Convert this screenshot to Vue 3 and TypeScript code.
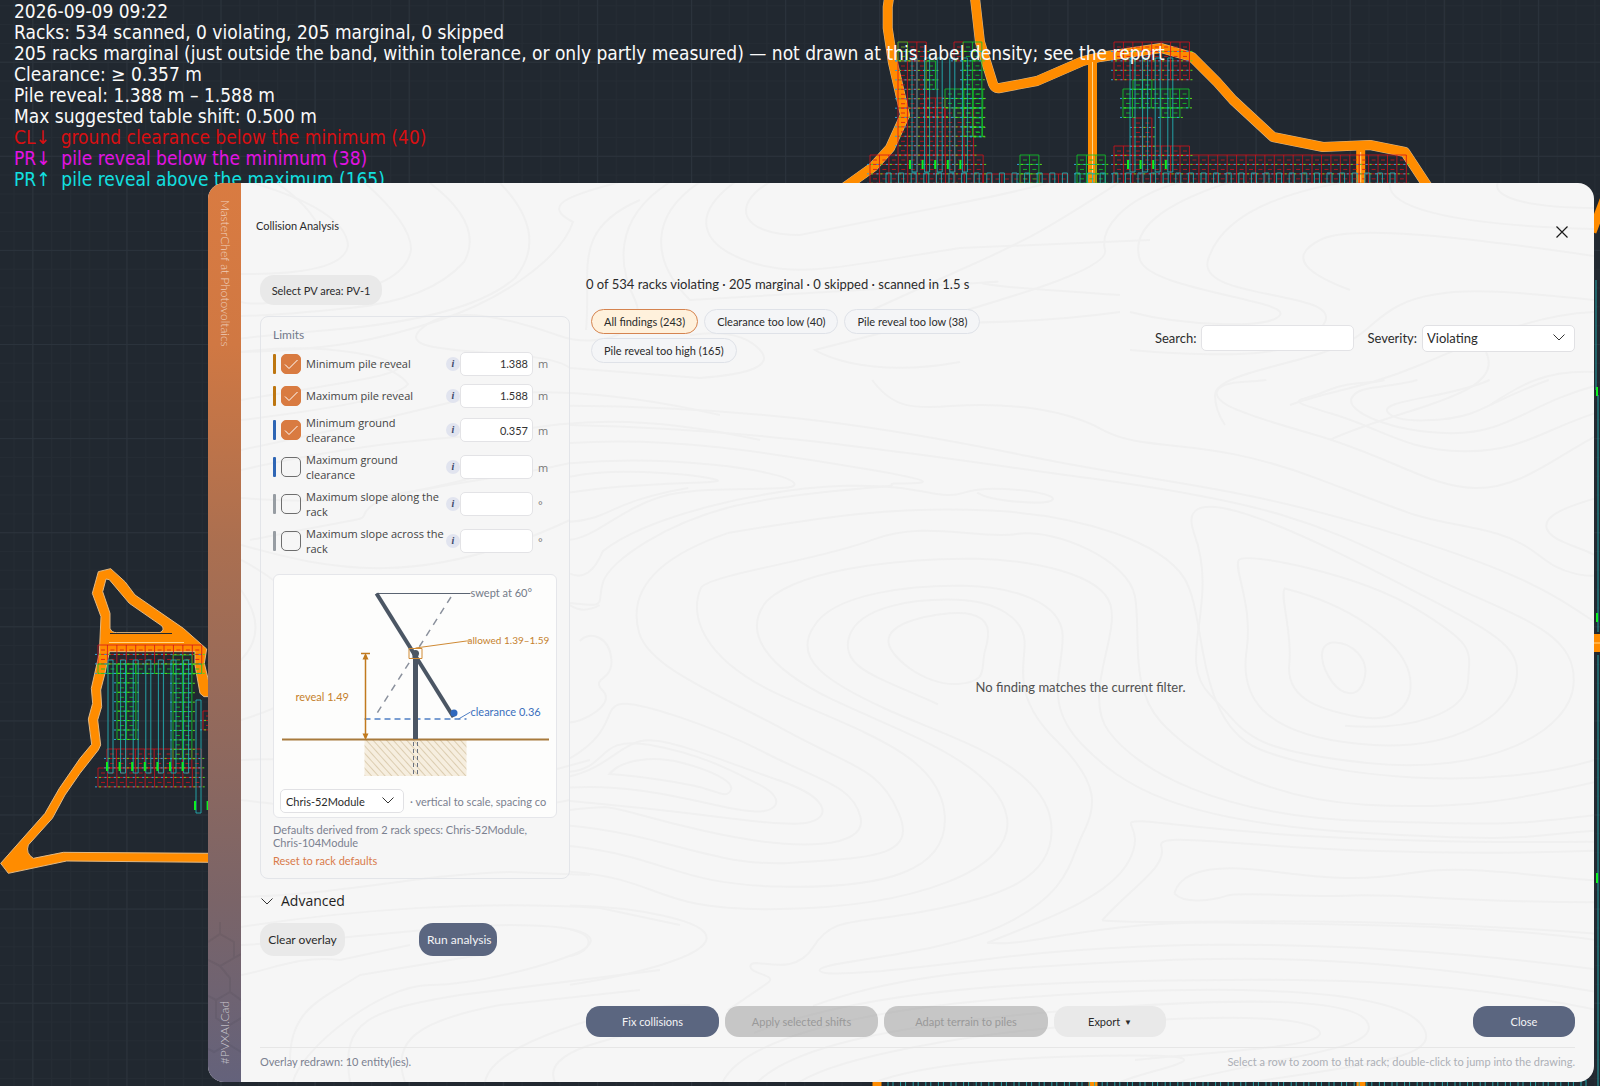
<script setup lang="ts">
import { ref } from 'vue'

interface Limit {
  id: string
  label: string
  on: boolean
  value: string
  unit: string
  tone: 'amber' | 'blue' | 'gray'
}

const limits = ref<Limit[]>([
  { id: 'min-reveal', label: 'Minimum pile reveal', on: true, value: '1.388', unit: 'm', tone: 'amber' },
  { id: 'max-reveal', label: 'Maximum pile reveal', on: true, value: '1.588', unit: 'm', tone: 'amber' },
  { id: 'min-clear', label: 'Minimum ground clearance', on: true, value: '0.357', unit: 'm', tone: 'blue' },
  { id: 'max-clear', label: 'Maximum ground clearance', on: false, value: '', unit: 'm', tone: 'blue' },
  { id: 'slope-along', label: 'Maximum slope along the rack', on: false, value: '', unit: '°', tone: 'gray' },
  { id: 'slope-across', label: 'Maximum slope across the rack', on: false, value: '', unit: '°', tone: 'gray' },
])

const filters = ['All findings (243)', 'Clearance too low (40)', 'Pile reveal too low (38)', 'Pile reveal too high (165)']
const activeFilter = ref(filters[0])
const search = ref('')
const severity = ref('Violating')
const rackSpec = ref('Chris-52Module')

const notes = [
  { text: '2026-09-09 09:22', tone: 'white' },
  { text: 'Racks: 534 scanned, 0 violating, 205 marginal, 0 skipped', tone: 'white' },
  { text: '205 racks marginal (just outside the band, within tolerance, or only partly measured) — not drawn at this label density; see the report', tone: 'white' },
  { text: 'Clearance: ≥ 0.357 m', tone: 'white' },
  { text: 'Pile reveal: 1.388 m – 1.588 m', tone: 'white' },
  { text: 'Max suggested table shift: 0.500 m', tone: 'white' },
  { text: 'CL↓  ground clearance below the minimum (40)', tone: 'red' },
  { text: 'PR↓  pile reveal below the minimum (38)', tone: 'magenta' },
  { text: 'PR↑  pile reveal above the maximum (165)', tone: 'cyan' },
]

/* Rack blocks of the drawing: x, y, columns, rows, colour */
type Block = [number, number, number, number, 'r' | 'g']
const CELL = 9.43
const blocks: Block[] = [
  [898, 42, 3, 2, 'r'], [898, 61, 3, 5, 'r'], [898, 108, 8, 5, 'r'], [870, 155, 12, 3, 'r'],
  [926, 61, 1, 3, 'g'], [954, 42, 1, 2, 'r'], [963, 42, 2, 10, 'g'], [945, 89, 4, 2, 'g'],
  [954, 108, 3, 1, 'g'], [973, 118, 1, 2, 'g'], [926, 98, 2, 2, 'r'], [898, 42, 1, 2, 'g'],
  [1020, 155, 2, 3, 'g'], [1077, 155, 3, 3, 'g'], [983, 174, 9, 1, 'r'],
  [1114, 42, 8, 4, 'r'], [1123, 89, 7, 2, 'g'], [1123, 108, 1, 1, 'g'], [1161, 108, 2, 1, 'g'],
  [1133, 118, 2, 3, 'r'], [1133, 80, 2, 1, 'g'], [1114, 146, 8, 1, 'r'], [1114, 155, 31, 3, 'r'],
  [98, 645, 11, 2, 'r'], [98, 664, 11, 1, 'g'], [117, 664, 2, 8, 'g'], [173, 655, 2, 11, 'g'],
  [107, 749, 10, 2, 'r'], [98, 768, 11, 2, 'r'], [203, 711, 1, 2, 'r'],
]

function cellPath(color: string): string {
  return blocks.filter(b => b[4] === color).map(([x, y, c, r]) => {
    let d = ''
    for (let i = 0; i <= c; i++) d += `M${x + i * CELL} ${y}v${r * CELL}`
    for (let j = 0; j <= r; j++) d += `M${x} ${y + j * CELL}h${c * CELL}`
    for (let i = 0; i < c; i++) for (let j = 0; j < r; j++) d += `M${x + i * CELL + 3} ${y + j * CELL + 5}h4`
    return d
  }).join('')
}

function pinPath(offset: number): string {
  return blocks.map(([x, y, c, r]) => {
    let d = ''
    for (let i = 0; i <= c; i++) for (let j = 1; j <= r; j++) d += `M${x + i * CELL + offset} ${y + j * CELL}h2`
    return d
  }).join('')
}

function strings(x: number, y: number, h: number, n: number, step = 12.6): string {
  return Array.from({ length: n }, (_, i) => `M${x + i * step} ${y}h5v${h}h-5z`).join('')
}

function ticks(x: number, y: number, n: number): string {
  return Array.from({ length: n }, (_, i) => `M${x + i * 12.6} ${y}v9`).join('')
}

const redCells = cellPath('r')
const greenCells = cellPath('g')
const bluePins = pinPath(-3)
const greenPins = pinPath(1)
const stringPath = [
  strings(108, 660, 113, 7), strings(196, 700, 113, 1),
  strings(912, 58, 114, 5), strings(1130, 58, 114, 4),
  strings(886, 173, 14, 41),
  strings(888, 1080, 10, 56), 'M1598 395V632M1598 655V1086M1596 280V390',
].join('')
const tickPath = [
  ticks(107, 762, 7), ticks(195, 801, 2), ticks(910, 160, 5), ticks(1128, 160, 4),
  'M1597 387v9M1597 613v9M1597 873v10',
].join('')

/* Height contours behind the dialog content, upper and left part */
const contours = [
  'M250 182Q345 210 348 245Q345 275 241 274',
  'M275 182Q310 205 320 230',
  'M365 183Q412 225 411 250Q405 285 330 296T241 302',
  'M430 183Q485 225 464 262Q430 300 350 308T241 316',
  'M500 183Q550 235 515 278Q470 318 330 330T241 342',
  'M620 182C570 195 540 205 573 222C560 260 500 300 440 320S330 350 241 352',
  'M640 200C570 230 592 270 586 330',
  'M670 182C610 220 620 270 635 300C650 330 600 350 560 336S450 300 420 330S540 345 570 368T700 378Q780 372 760 350T690 335',
  'M700 182C650 215 650 260 690 300T860 290T990 282T1120 295',
  'M735 182C690 215 700 245 750 262S850 265 960 248T1150 240',
  'M770 182C730 205 740 235 800 235T950 205T1020 182',
  'M1120 182C1060 220 1040 235 960 270T850 320S990 330 1120 312',
  'M1180 182C1120 200 1100 230 1105 250S1000 300 940 318T815 350S860 380 960 362',
  'M1230 182C1160 205 1130 230 1140 260S1290 300 1280 315S1180 325 1130 312',
  'M1345 182C1270 195 1220 220 1208 260S1340 290 1325 322S1250 360 1130 350',
  'M1390 182C1385 205 1440 225 1594 229',
  'M1498 182C1490 200 1540 208 1594 208',
  'M1594 256C1450 235 1350 225 1320 240C1285 258 1310 275 1350 290',
  'M1594 300C1500 290 1440 285 1400 305C1370 320 1370 335 1330 350S1215 375 1215 395Q1215 410 1225 425',
  'M1594 312C1530 315 1480 340 1420 365S1330 390 1290 405',
  'M1486 352C1500 380 1460 395 1420 408S1350 430 1330 440',
  'M1594 372C1545 370 1520 385 1490 405',
  'M241 352C330 340 400 360 398 368S330 385 241 400',
  'M241 420C340 408 400 396 408 384Q400 372 365 360',
  'M241 450C360 425 420 410 460 400S590 385 720 415',
  'M241 470C350 445 420 440 480 435S600 405 760 440',
  'M241 498C330 505 400 500 500 470',
  'M250 540C400 510 350 525 370 507S500 480 570 463',
  'M241 545C330 570 420 590 570 520',
  'M241 560Q300 590 320 640T241 720',
  'M241 590Q270 630 241 660',
  'M241 760C330 755 400 775 480 790T590 760',
  'M241 800C330 810 430 830 570 800',
  'M241 897C340 895 420 874 510 872T590 875',
  'M241 927C350 910 480 900 600 908T680 925',
  'M241 945C350 940 440 925 510 925C580 925 600 935 587 947S480 985 430 985S300 1050 293 1082',
  'M241 975C270 970 300 955 340 960T410 945',
  'M290 1060C290 1010 320 1000 360 975T480 955',
  'M350 1082C340 1020 370 1010 460 995T660 970',
  'M405 1082C390 1040 420 1020 500 1005T640 990',
  'M485 1082Q490 1055 560 1030T690 1005',
  'M555 1082Q545 1060 590 1045T690 1025',
]

/* Contours of the results area, drawn on a 1568-unit square sheet */
const sheetContours = [
  'M460 0C490 60 520 65 580 58S740 55 810 110S960 120 1140 220S1280 300 1380 330S1470 410 1530 430S1568 400 1568 380',
  'M0 57C300 60 500 110 700 170S1000 230 1230 330S1500 480 1568 545',
  'M0 100C300 110 500 160 800 220S1150 330 1300 430S1530 560 1528 670S1400 880 1210 850S1030 780 975 700S990 500 950 340S1180 390 1300 480S1450 600 1440 670S1350 830 1200 808S1020 700 1030 600S1010 420 1018 400S1200 430 1290 510S1370 600 1367 670S1280 780 1180 768',
  'M1088 463C1080 480 1100 560 1095 630S1130 730 1200 748S1290 700 1275 640S1190 500 1088 463Z',
  'M1160 583C1135 590 1145 640 1160 670S1200 710 1209 665S1190 580 1160 583Z',
  'M0 140C150 125 300 160 460 200S480 225 490 232S350 245 250 280S60 400 50 450S60 505 0 495',
  'M0 185C150 165 320 200 340 227S220 230 150 255S40 350 0 355',
  'M0 215C80 190 220 215 225 223S100 225 0 250',
  'M0 315C60 310 60 270 180 240',
  'M0 430Q30 450 50 380C120 300 300 240 420 235S560 270 600 250S740 250 735 265S640 270 620 250',
  'M240 340C400 300 500 280 640 290S900 360 935 440S950 760 1050 820S1400 920 1568 840',
  'M240 340C120 400 90 480 105 560S230 700 330 780S470 860 500 960S460 1060 340 1072S150 1010 0 990',
  'M200 460C220 430 380 400 460 355S620 355 680 342S850 400 860 480S850 680 900 760S1060 930 1210 943S1450 930 1568 890',
  'M200 460C180 520 200 620 320 700S560 830 570 960S480 1130 320 1125S150 1060 0 1035',
  'M300 490C360 410 540 395 620 397S810 430 823 500S780 700 820 780S980 970 1220 980S1450 985 1568 965',
  'M300 490C260 560 300 640 400 710S650 850 665 970S520 1170 320 1175S150 1110 0 1092',
  'M370 550C400 470 530 455 600 457S750 490 750 570S720 720 780 810S920 980 1200 1005S1450 1010 1568 1000',
  'M370 550C340 620 390 670 480 730S720 850 732 980S650 1150 540 1180S400 1190 370 1260S280 1280 275 1300S320 1320 300 1340T240 1400',
  'M425 570C440 500 530 485 590 488S690 530 692 580S670 700 740 800S800 950 780 1010S760 1140 660 1210S380 1290 380 1310S500 1310 640 1285S1100 1220 1568 1310',
  'M425 570C410 640 470 660 560 720',
  'M485 575C490 530 580 510 610 520S640 560 632 600S640 670 590 675S480 610 485 575Z',
  'M0 500Q20 520 45 500M15 580C30 555 60 570 63 620S30 660 50 690S20 760 0 760',
  'M0 840C70 780 50 730 75 720S220 770 300 830S430 900 442 970S350 1050 200 1000S80 940 0 955',
  'M0 880C60 860 80 800 120 800S240 850 320 890S400 980 350 985S200 960 0 935',
  'M60 875C80 840 130 835 170 850S250 890 245 910S225 915 200 905S110 880 60 875Z',
  'M0 905C100 895 200 940 260 955S330 930 290 900S200 830 120 810S60 860 0 870',
  'M0 1167C100 1170 210 1200 208 1240S100 1320 0 1343',
  'M0 1220Q30 1230 28 1250T0 1280',
  'M635 1250C720 1200 820 1150 850 1070S830 980 870 980S1100 1035 1568 1025',
  'M635 1250C700 1260 800 1200 1000 1205S1400 1210 1568 1245',
  'M810 1200C860 1120 910 1080 900 1035S1100 1070 1568 1045',
  'M810 1200C900 1215 1100 1180 1568 1230',
  'M920 1140C930 1090 980 1075 1060 1090S1200 1115 1280 1095S1450 1100 1568 1112',
  'M920 1140C935 1165 980 1155 1000 1145S1120 1150 1190 1145S1350 1160 1568 1160',
  'M370 1390C480 1330 600 1310 800 1295S1200 1270 1568 1360',
  'M280 1450C420 1370 620 1340 850 1335S1300 1320 1568 1400',
  'M230 1568C250 1480 400 1400 700 1370S1250 1350 1295 1430S1200 1520 1000 1568',
  'M280 1568C330 1480 500 1430 760 1400S1200 1370 1215 1430S1080 1500 900 1568',
  'M340 1568C400 1500 620 1450 800 1430S1120 1410 1140 1445S1000 1490 860 1510',
  'M450 1568C520 1520 680 1500 860 1500S840 1540 830 1568',
  'M1568 120C1500 170 1450 240 1380 240S1250 170 1130 120S980 50 985 25S1040 5 1060 0',
  'M1568 70C1480 110 1450 160 1360 158S1240 110 1160 75S1110 50 1150 25S1220 10 1240 0',
  'M1568 10C1460 50 1430 120 1340 118S1180 70 1190 40S1240 20 1290 0',
  'M1490 0C1430 30 1400 60 1370 75S1260 100 1245 72S1340 40 1400 0',
  'M1568 260C1520 280 1480 300 1487 330S1540 370 1568 395',
]
</script>

<template>
  <div class="desktop">
    <svg class="drawing" viewBox="0 0 1600 1086" preserveAspectRatio="xMinYMin slice" aria-hidden="true">
      <defs>
        <pattern id="minor" x="32.3" y="61.7" width="18.82" height="18.82" patternUnits="userSpaceOnUse">
          <path d="M0 .5H18.82M.5 0V18.82" stroke="#252c34" fill="none" />
        </pattern>
        <pattern id="major" x="32.3" y="61.7" width="94.1" height="94.1" patternUnits="userSpaceOnUse">
          <path d="M0 .5H94.1M.5 0V94.1" stroke="#2b333c" fill="none" />
        </pattern>
      </defs>
      <rect width="1600" height="1086" fill="url(#minor)" />
      <rect width="1600" height="1086" fill="url(#major)" />
      <g class="road-edge">
        <path d="M889 -2L887.7 7V28L893 63L905 115L890 148L873 167L845 187" />
        <path d="M975 -2L980 42L993 84Q995 89 1000 88L1037 81L1083 61L1100 57L1161 48L1192 57L1217 82L1233 100L1273 137L1323 147L1370 145L1405 152L1430 190" />
      </g>
      <g class="road">
        <path d="M889 -2L887.7 7V28L893 63L905 115L890 148L873 167L845 187" />
        <path d="M975 -2L980 42L993 84Q995 89 1000 88L1037 81L1083 61L1100 57L1161 48L1192 57L1217 82L1233 100L1273 137L1323 147L1370 145L1405 152L1430 190" />
        <path d="M1092.5 58V190M1360.7 148V190M877 1080v8M1093 1080v8M1361 1080v8" />
        <path d="M1592 232L1604 200" />
        <path d="M1590 643h12" stroke-width="18" class="thick" />
      </g>
      <path d="M1092.5 62V190M1360.7 152V190M1594 643h6" stroke="#ffd489" stroke-width="1" />
      <path
        class="area"
        transform="translate(0 540) scale(.33333)"
        fill-rule="evenodd"
        d="M2 970L135 820L178 745L240 655L275 613L265 537L278 490L274 445L298 340L303 230L277 160L295 95L332 86L375 125L405 165L550 265L620 327L613 370L630 440V470L612 470L600 460L585 375V335L328 335L315 400L302 450L305 500L293 540L302 615L295 630L240 700L195 765L157 835L85 915Q76 940 100 955L190 937L630 940V967L200 963L25 1000ZM318 117L308 155L330 220V265Q335 278 350 278H480Q495 270 486 258L388 190L328 119Z"
      />
      <path d="M109 642.5H184" stroke="#ffd489" />
      <path d="M110 633.5H172" stroke="#21282f" />
      <path :d="redCells" stroke="#d4121c" stroke-opacity=".8" fill="none" />
      <path :d="greenCells" stroke="#10c428" stroke-opacity=".85" fill="none" />
      <path :d="bluePins" stroke="#2f9fd8" fill="none" />
      <path :d="greenPins" stroke="#5cd81c" fill="none" />
      <path :d="stringPath" stroke="#22aeb2" stroke-opacity=".9" fill="none" />
      <path :d="tickPath" stroke="#0df020" stroke-width="2" fill="none" />
    </svg>

    <div class="notes">
      <p v-for="n in notes" :key="n.text" :class="n.tone">{{ n.text }}</p>
    </div>

    <section class="dialog" aria-label="Collision Analysis">
      <aside class="rail">
        <svg class="hex" viewBox="0 0 33 160" aria-hidden="true">
          <path d="M0 20L12 12L26 20V36L12 44L0 38M12 44L22 56V70L33 78M22 70L8 78L0 74M8 78V96L20 104L33 96M20 104V122L6 130L0 127M20 122L33 130M26 36L33 32M12 12V0" />
        </svg>
        <span class="motto">MasterChef at Photovoltaics</span>
        <span class="brand">#PVXAI.Cad</span>
      </aside>

      <div class="main">
        <svg class="relief" viewBox="241 183 1353 899" preserveAspectRatio="xMinYMin slice" aria-hidden="true">
          <path v-for="(d, i) in contours" :key="'c' + i" :d="d" />
          <g transform="translate(570 380) scale(.6569 .4503)">
            <path v-for="(d, i) in sheetContours" :key="'s' + i" :d="d" />
          </g>
        </svg>

        <header class="head">
          <h1>Collision Analysis</h1>
          <button class="close-x" type="button" aria-label="Close dialog">
            <svg width="12" height="12" viewBox="0 0 12 12"><path d="M.5 .5L11.500 11.500M11.500 .5L.5 11.500" /></svg>
          </button>
        </header>

        <div class="columns">
          <div class="left">
            <button class="btn soft pick" type="button">Select PV area: PV-1</button>

            <section class="card">
              <h2>Limits</h2>
              <ul class="limits">
                <li v-for="l in limits" :key="l.id">
                  <i class="bar" :class="l.tone"></i>
                  <span class="check">
                    <input :id="l.id" v-model="l.on" type="checkbox" />
                    <svg v-if="l.on" viewBox="0 0 20 20" aria-hidden="true"><path d="M4 10.500L8 14.500L16.500 6" /></svg>
                  </span>
                  <label :for="l.id">{{ l.label }}</label>
                  <span class="info">i</span>
                  <input v-model="l.value" class="num" type="text" :aria-label="l.label + ' value'" />
                  <span class="unit">{{ l.unit }}</span>
                </li>
              </ul>

              <div class="figure">
                <svg class="rack" viewBox="24 15 281 214" aria-label="Rack cross-section">
                  <defs>
                    <pattern id="soil" width="5" height="5" patternUnits="userSpaceOnUse" patternTransform="rotate(-42)">
                      <rect width="5" height="5" fill="#f6eedf" />
                      <path d="M.5 0V5" stroke="#dccdb0" />
                    </pattern>
                  </defs>
                  <rect x="114" y="180" width="102" height="36" fill="url(#soil)" />
                  <path d="M163 182V216M167 182V216" stroke="#6b7280" stroke-dasharray="4 3" />
                  <path d="M200.500 37L126 154" stroke="#8b919d" stroke-width="1.500" stroke-dasharray="7 6" />
                  <path d="M114 159H216" stroke="#4f7fc4" stroke-width="1.500" stroke-dasharray="6 4" />
                  <path d="M126 33.500H220" stroke="#5b6472" />
                  <path d="M31.500 179.500H298.500" stroke="#a87a3c" stroke-width="2" />
                  <path d="M115 95V178M110.500 93.500H119.500" stroke="#c17a1e" stroke-width="1.500" />
                  <path d="M115 93L118 99.500H112ZM115 180L118 173.500H112Z" fill="#c17a1e" />
                  <path d="M165 94V179" stroke="#4b5664" stroke-width="5" />
                  <path d="M126 33.500L203 157" stroke="#4b5664" stroke-width="4" />
                  <path d="M158.500 88.500H171.500V98.500H158.500ZM165 88L216 81H220" stroke="#cf8a35" fill="none" />
                  <circle cx="165" cy="93.500" r="3.500" fill="#4b5664" />
                  <path d="M208 159L220 152" stroke="#4f7fc4" />
                  <circle cx="203.500" cy="153" r="3.500" fill="#2f68bd" />
                  <text x="220" y="37" fill="#737b89">swept at 60°</text>
                  <text x="217" y="84" fill="#c5812c" class="fine">allowed 1.39–1.59</text>
                  <text x="45" y="141" fill="#c5812c">reveal 1.49</text>
                  <text x="220" y="156" fill="#3a6fbd">clearance 0.36</text>
                </svg>
                <div class="spec">
                  <span class="select small">
                    <select v-model="rackSpec" aria-label="Rack spec">
                      <option>Chris-52Module</option>
                      <option>Chris-104Module</option>
                    </select>
                    <svg class="chev" viewBox="0 0 12 7" aria-hidden="true"><path d="M.5 .5L6 6L11.500 .5" /></svg>
                  </span>
                  <span class="scale">· vertical to scale, spacing co</span>
                </div>
              </div>

              <p class="derived">Defaults derived from 2 rack specs: Chris-52Module, Chris-104Module</p>
              <a class="reset" href="#">Reset to rack defaults</a>
            </section>

            <button class="advanced" type="button">
              <svg class="chev" viewBox="0 0 12 7" aria-hidden="true"><path d="M.5 .5L6 6L11.500 .5" /></svg>
              Advanced
            </button>
            <div class="run">
              <button class="btn soft" type="button">Clear overlay</button>
              <button class="btn solid" type="button">Run analysis</button>
            </div>
          </div>

          <div class="right">
            <p class="summary">0 of 534 racks violating · 205 marginal · 0 skipped · scanned in 1.5 s</p>
            <div class="toolbar">
              <div class="pills">
                <button
                  v-for="f in filters"
                  :key="f"
                  type="button"
                  class="pill"
                  :class="{ active: f === activeFilter }"
                  @click="activeFilter = f"
                >{{ f }}</button>
              </div>
              <div class="query">
                <label for="search">Search:</label>
                <input id="search" v-model="search" type="text" />
                <label for="severity" class="sev">Severity:</label>
                <span class="select wide">
                  <select id="severity" v-model="severity">
                    <option>Violating</option>
                    <option>Marginal</option>
                  </select>
                  <svg class="chev" viewBox="0 0 12 7" aria-hidden="true"><path d="M.5 .5L6 6L11.500 .5" /></svg>
                </span>
              </div>
            </div>
            <div class="results">No finding matches the current filter.</div>
            <div class="actions">
              <button class="btn solid" type="button">Fix collisions</button>
              <button class="btn off" type="button" disabled>Apply selected shifts</button>
              <button class="btn off" type="button" disabled>Adapt terrain to piles</button>
              <button class="btn soft export" type="button">Export <span class="tri">▼</span></button>
              <button class="btn solid last" type="button">Close</button>
            </div>
          </div>
        </div>

        <footer class="status">
          <span>Overlay redrawn: 10 entity(ies).</span>
          <span class="hint">Select a row to zoom to that rack; double-click to jump into the drawing.</span>
        </footer>
      </div>
    </section>
  </div>
</template>

<style>
body { margin: 0; background: #212830; }
</style>

<style scoped>
* { box-sizing: border-box; }
p, h1, h2, ul { margin: 0; padding: 0; font-weight: 400; }
button, input, select { font: inherit; color: inherit; margin: 0; }

.desktop {
  position: relative;
  min-height: 100vh;
  display: flex;
  padding: 183px 6px 4px 208px;
  background: #212830;
  overflow: hidden;
  font-family: Lato, "Liberation Sans", sans-serif;
  font-size: 11px;
  color: #2b2b2b;
}
.drawing { position: absolute; inset: 0; width: 100%; height: 100%; }
.road path { fill: none; stroke: #ff8c00; stroke-width: 9; stroke-linejoin: round; }
.road .thick { stroke-width: 18; }
.road-edge path { fill: none; stroke: #d9b98c; stroke-width: 10; stroke-linejoin: round; }
.area { fill: #ff8c00; stroke: #e3b983; stroke-width: 3; }

.notes {
  position: absolute;
  left: 14px;
  top: 1px;
  font-family: "DejaVu Sans Condensed", "DejaVu Sans", sans-serif;
  font-stretch: condensed;
  font-size: 19px;
  line-height: 21px;
  white-space: pre;
}
.white { color: #fafafa; }
.red { color: #d80f12; }
.magenta { color: #e312e3; }
.cyan { color: #12e0e0; }

.dialog {
  position: relative;
  flex: 1;
  min-width: 0;
  display: flex;
  border-radius: 16px;
  overflow: hidden;
  background: #f6f6f6;
}
.rail {
  position: relative;
  width: 33px;
  flex: none;
  display: flex;
  flex-direction: column;
  justify-content: space-between;
  align-items: center;
  padding: 17px 0 18px;
  background: linear-gradient(#d97b41, #d07843 18%, #ab6f50 40%, #7a6468 80%, #64627b);
  color: rgba(255, 255, 255, 0.65);
  font-weight: 300;
  font-size: 12px;
}
.rail span { writing-mode: vertical-rl; line-height: 16px; }
.brand { transform: rotate(180deg); }
.hex { position: absolute; left: 0; bottom: 0; width: 33px; height: 160px; }
.hex path { fill: none; stroke: rgba(40, 40, 60, 0.09); stroke-width: 2; }

.main { position: relative; flex: 1; min-width: 0; display: flex; flex-direction: column; }
.relief { position: absolute; inset: 0; width: 100%; height: 100%; }
.relief path { fill: none; stroke: #f0f0f0; stroke-width: 2; vector-effect: non-scaling-stroke; }
.head, .columns, .status { position: relative; }

.head { display: flex; justify-content: space-between; height: 92px; padding: 34px 20px 0 15px; }
h1 { font-size: 11px; line-height: 18px; }
.close-x { width: 24px; height: 24px; margin-top: 3px; padding: 0; border: 0; background: none; display: grid; place-items: center; }
.close-x path { stroke: #1a1a1a; stroke-width: 1.2; fill: none; }

.columns { flex: 1; display: grid; grid-template-columns: 310px 1fr; column-gap: 16px; padding: 0 19px 10px; }
.left { display: flex; flex-direction: column; align-items: flex-start; }
.btn { border: 0; border-radius: 14px; padding: 0 10px; height: 31px; white-space: nowrap; font-size: 11px; }
.soft { background: #e9e9e9; }
.solid { background: #5b6680; color: #f4f4f6; }
.off { background: rgba(120, 120, 120, 0.38); color: #999; }
.pick { width: 122px; height: 30px; }

.card { align-self: stretch; margin-top: 11px; height: 563px; border: 1px solid #e3e5e9; border-radius: 8px; padding: 10px 12px; }
h2 { font-size: 12px; line-height: 16px; color: #737a8c; }
.limits { list-style: none; display: grid; gap: 7px; padding-top: 8px; }
.limits li { display: flex; align-items: center; min-height: 25px; font-family: "Open Sans", "Noto Sans", sans-serif; }
.bar { width: 3px; height: 20px; border-radius: 1px; }
.amber { background: #bd7610; }
.blue { background: #2f66b5; }
.gray { background: #979da3; }
.check { display: grid; width: 20px; height: 20px; margin-left: 5px; }
.check > * { grid-area: 1 / 1; }
.check input { appearance: none; width: 20px; height: 20px; border: 1px solid #6e6e6e; border-radius: 5px; }
.check input:checked { background: #d97b41; border-color: #d97b41; }
.check svg { width: 20px; height: 20px; pointer-events: none; }
.check path { fill: none; stroke: #fff; stroke-width: 1; }
.limits label { flex: 1; padding-left: 5px; font-size: 11px; line-height: 15px; color: #444; }
.info {
  width: 14px; height: 14px; border-radius: 7px; background: #e1e4ef; color: #3d4669;
  font: italic bold 10px/14px "Liberation Serif", serif; text-align: center;
}
.num {
  width: 73px; height: 24px; padding: 0 4px; border: 1px solid #e3e3e6; border-radius: 5px;
  background: #fff; text-align: right; font-family: Lato, sans-serif; font-size: 11px; color: #333;
}
.unit { width: 19px; margin-left: 5px; font-size: 11px; color: #777; }

.figure { height: 244px; margin-top: 18px; border: 1px solid #e5e6ea; border-radius: 6px; background: #fdfdfc; overflow: hidden; }
.rack { display: block; width: 100%; height: 214px; }
.rack text { font-family: Lato, sans-serif; font-size: 11px; }
.rack .fine { font-size: 10px; }
.spec { display: flex; align-items: center; gap: 6px; padding: 0 4px 0 6px; }
.select { position: relative; display: inline-flex; }
.select select { appearance: none; width: 100%; border: 1px solid #e1e1e4; border-radius: 5px; background: #fff; }
.select .chev { position: absolute; right: 10px; top: 50%; margin-top: -4px; pointer-events: none; }
.chev { width: 12px; height: 7px; }
.chev path { fill: none; stroke: #333; }
.small { flex: none; width: 124px; }
.small select { height: 24px; padding: 0 5px; font-size: 11px; }
.wide { width: 153px; }
.wide select { height: 27px; padding: 0 4px; }
.scale { white-space: nowrap; color: #7b8190; font-size: 11px; }
.derived { margin-top: 5px; font-size: 11px; line-height: 13px; color: #7b8190; }
.reset { display: block; margin-top: 5px; font-size: 11px; line-height: 14px; color: #d97b4b; text-decoration: none; }

.advanced {
  display: flex; align-items: center; gap: 8px; margin-top: 12px; padding: 0 1px; border: 0; background: none;
  font-family: "Open Sans", "Noto Sans", sans-serif; font-size: 14px; line-height: 20px; color: #1e1e1e;
}
.run { display: flex; gap: 74px; margin-top: 12px; }
.run .btn { height: 33px; padding: 0 8px; font-size: 12px; }
.run .soft { width: 85px; }
.run .solid { width: 78px; }

.right { display: flex; flex-direction: column; min-width: 0; }
.summary { font-size: 13px; line-height: 18px; }
.toolbar { display: flex; justify-content: space-between; align-items: center; gap: 32px; margin-top: 16px; }
.pills { flex: 1; display: flex; flex-wrap: wrap; gap: 4px 6px; padding-left: 5px; }
.pill { height: 25px; padding: 0 12px; border: 1px solid #dfe2e8; border-radius: 13px; background: #f4f5f7; font-size: 11px; }
.pill.active { background: #fff1dc; border-color: #d58450; }
.query { display: flex; align-items: center; padding-top: 4px; font-size: 13px; }
.query input { width: 153px; height: 26px; margin-left: 5px; border: 1px solid #e3e3e6; border-radius: 5px; background: #fff; }
.sev { margin: 0 5px 0 13px; }
.results { flex: 1; display: grid; place-items: center; padding: 5px 0 0; font-size: 13px; color: #505050; }
.actions { display: flex; gap: 6px; }
.actions .btn { width: 133px; }
.actions .off { width: 153px; }
.actions .off + .off { width: 164px; }
.actions .export { width: 112px; }
.actions .last { width: 102px; margin-left: auto; }
.tri { font-size: 8px; vertical-align: 1px; margin-left: 1px; }

.status { display: flex; justify-content: space-between; margin: 0 19px; padding: 6px 0 13px; border-top: 1px solid #e6e6e6; line-height: 15px; font-size: 11px; color: #7b8190; }
.hint { color: #adb0b6; }
</style>
